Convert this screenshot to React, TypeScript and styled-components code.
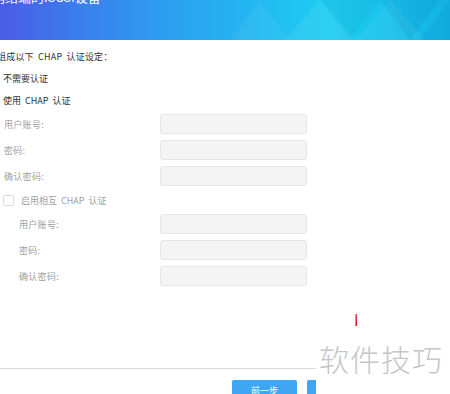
import React from "react";
import styled, { createGlobalStyle } from "styled-components";

const Global = createGlobalStyle`
  html, body { margin: 0; padding: 0; background: #fff; }
  body { width: 450px; height: 394px; overflow: hidden; font-family: "Noto Sans CJK SC", "Noto Sans", sans-serif; }
`;

const Page = styled.div`
  position: relative;
  width: 450px;
  height: 394px;
  overflow: hidden;
  background: #fff;
`;

const Header = styled.div`
  position: relative;
  height: 40px;
  overflow: hidden;
  background: linear-gradient(90deg, #4a5ce6 0%, #3a7fec 18%, #2d9cf0 35%, #23b6f1 55%, #1ecdf2 72%, #18c3ec 85%, #12b2e3 100%);
`;

const HeaderArt = styled.svg`
  position: absolute;
  left: 0;
  top: 0;
`;

const Title = styled.div`
  position: relative;
  margin: -11px 0 0 -34px;
  font-size: 13px;
  line-height: 16px;
  color: #fff;
  white-space: nowrap;
`;

const Body = styled.div`
  padding: 6px 0 0 0;
`;

const Line = styled.div<{ $indent?: number }>`
  height: 22px;
  line-height: 22px;
  padding-left: ${(p) => p.$indent ?? 0}px;
  font-size: 9px;
  color: #333;
  white-space: nowrap;
  word-spacing: 2px;
`;

const Intro = styled(Line)`
  margin-left: -3px;
  letter-spacing: 0.2px;
`;

const Group = styled.div<{ $indent: number; $top: number }>`
  display: grid;
  grid-template-columns: ${(p) => 160 - p.$indent}px 147px;
  row-gap: 6px;
  padding-left: ${(p) => p.$indent}px;
  margin-top: ${(p) => p.$top}px;
  align-items: center;
`;

const Label = styled.div`
  font-size: 9px;
  color: #a0a0a0;
  white-space: nowrap;
  letter-spacing: 0.3px;
`;

const Input = styled.div`
  box-sizing: border-box;
  height: 20px;
  background: #f4f4f4;
  border: 1px solid #e6e6e6;
  border-radius: 3px;
`;

const CheckRow = styled.div`
  display: flex;
  align-items: center;
  gap: 7px;
  height: 20px;
  margin-top: 4px;
  padding-left: 3px;
  font-size: 9px;
  color: #a0a0a0;
  word-spacing: 2px;
`;

const Box = styled.span`
  box-sizing: border-box;
  width: 11px;
  height: 11px;
  border: 1px solid #dcdcdc;
  border-radius: 2px;
  background: #fff;
`;

const Divider = styled.div`
  margin-top: 82px;
  height: 1px;
  border-top: 1px solid #dadada;
`;

const Buttons = styled.div`
  display: flex;
  gap: 10px;
  padding-left: 232px;
  margin-top: 10px;
`;

const Button = styled.div`
  width: 65px;
  height: 24px;
  background: #3ea6f2;
  border-radius: 2px;
  color: #fff;
  font-size: 9px;
  line-height: 22px;
  text-align: center;
`;

const Watermark = styled.div`
  position: absolute;
  left: 316px;
  top: 338px;
  width: 134px;
  height: 56px;
  background: #fff;
  font-size: 30px;
  line-height: 40px;
  font-weight: 300;
  color: #c6c6c6;
  padding-left: 3px;
  letter-spacing: 1px;
  white-space: nowrap;
`;

const RedMark = styled.svg`
  position: absolute;
  left: 353px;
  top: 314px;
`;

export default function App() {
  return (
    <Page>
      <Global />
      <Header>
        <HeaderArt width="450" height="40" viewBox="0 0 450 40">
          <polygon points="230,40 260,0 290,40" fill="#ffffff" opacity="0.05" />
          <polygon points="285,40 320,0 355,40" fill="#ffffff" opacity="0.07" />
          <polygon points="320,0 350,40 380,0" fill="#000000" opacity="0.03" />
          <polygon points="355,40 390,0 425,40" fill="#ffffff" opacity="0.06" />
          <polygon points="380,0 410,40 440,0" fill="#003a8c" opacity="0.08" />
          <polygon points="420,40 450,0 450,40" fill="#003a8c" opacity="0.06" />
        </HeaderArt>
        <Title>添加网络端的iSCSI设备</Title>
      </Header>
      <Body>
        <Intro>组成以下 CHAP 认证设定：</Intro>
        <Line $indent={3}>不需要认证</Line>
        <Line $indent={3}>使用 CHAP 认证</Line>
        <Group $indent={4} $top={2}>
          <Label>用户账号:</Label>
          <Input />
          <Label>密码:</Label>
          <Input />
          <Label>确认密码:</Label>
          <Input />
        </Group>
        <CheckRow>
          <Box />
          启用相互 CHAP 认证
        </CheckRow>
        <Group $indent={19} $top={4}>
          <Label>用户账号:</Label>
          <Input />
          <Label>密码:</Label>
          <Input />
          <Label>确认密码:</Label>
          <Input />
        </Group>
        <Divider />
        <Buttons>
          <Button>前一步</Button>
          <Button>下一步</Button>
        </Buttons>
      </Body>
      <RedMark width="6" height="14" viewBox="0 0 6 14">
        <path d="M2.5 0 L3.8 0 L4.2 12 L2.4 12 Z" fill="#e02020" />
      </RedMark>
      <Watermark>软件技巧</Watermark>
    </Page>
  );
}
